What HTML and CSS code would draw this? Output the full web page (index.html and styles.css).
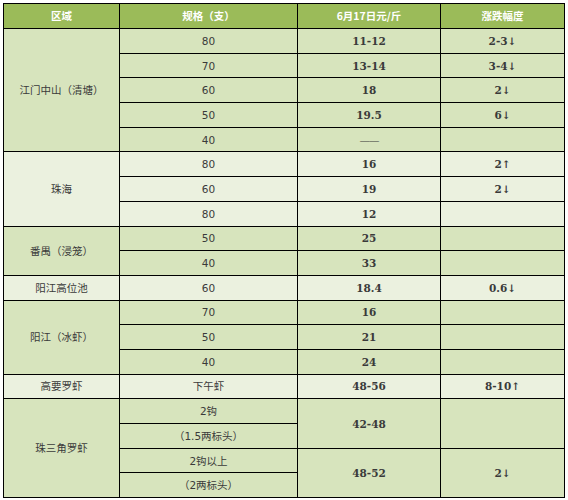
FILE: index.html
```html
<!DOCTYPE html>
<html lang="zh">
<head>
<meta charset="utf-8">
<link rel="stylesheet" href="styles.css">
</head>
<body>
<table class="price">
  <colgroup>
    <col class="c1"><col class="c2"><col class="c3"><col class="c4">
  </colgroup>
  <thead>
    <tr class="head"><th>区域</th><th>规格（支）</th><th>6月17日元/斤</th><th>涨跌幅度</th></tr>
  </thead>
  <tbody>
    <tr class="dk"><td rowspan="5" class="area">江门中山（清塘）</td><td class="spec">80</td><td class="num">11-12</td><td class="down">2-3↓</td></tr>
    <tr class="dk"><td class="spec">70</td><td class="num">13-14</td><td class="down">3-4↓</td></tr>
    <tr class="dk"><td class="spec">60</td><td class="num">18</td><td class="down">2↓</td></tr>
    <tr class="dk"><td class="spec">50</td><td class="num">19.5</td><td class="down">6↓</td></tr>
    <tr class="dk"><td class="spec">40</td><td class="num dash">——</td><td></td></tr>

    <tr class="lt"><td rowspan="3" class="area">珠海</td><td class="spec">80</td><td class="num">16</td><td class="up">2↑</td></tr>
    <tr class="lt"><td class="spec">60</td><td class="num">19</td><td class="down">2↓</td></tr>
    <tr class="lt"><td class="spec">80</td><td class="num">12</td><td></td></tr>

    <tr class="dk"><td rowspan="2" class="area">番禺（浸笼）</td><td class="spec">50</td><td class="num">25</td><td></td></tr>
    <tr class="dk"><td class="spec">40</td><td class="num">33</td><td></td></tr>

    <tr class="lt"><td class="area">阳江高位池</td><td class="spec">60</td><td class="num">18.4</td><td class="down">0.6↓</td></tr>

    <tr class="dk"><td rowspan="3" class="area">阳江（冰虾）</td><td class="spec">70</td><td class="num">16</td><td></td></tr>
    <tr class="dk"><td class="spec">50</td><td class="num">21</td><td></td></tr>
    <tr class="dk"><td class="spec">40</td><td class="num">24</td><td></td></tr>

    <tr class="lt"><td class="area">高要罗虾</td><td class="spec">下午虾</td><td class="num">48-56</td><td class="up">8-10↑</td></tr>

    <tr class="dk"><td rowspan="4" class="area">珠三角罗虾</td><td class="spec">2钩</td><td rowspan="2" class="num">42-48</td><td rowspan="2"></td></tr>
    <tr class="dk"><td class="spec">（1.5两标头）</td></tr>
    <tr class="dk"><td class="spec">2钩以上</td><td rowspan="2" class="num">48-52</td><td rowspan="2" class="down">2↓</td></tr>
    <tr class="dk"><td class="spec">（2两标头）</td></tr>
  </tbody>
</table>
</body>
</html>
```

FILE: styles.css
```css
html, body {
  margin: 0;
  padding: 0;
  background: #ffffff;
}
body {
  padding: 3px 0 0 3px;
  font-family: "Noto Sans CJK SC", "Noto Sans", sans-serif;
}
.price {
  border-collapse: collapse;
  table-layout: fixed;
  width: 561px;
  border: 1px solid #000000;
}
.c1 { width: 116px; }
.c2 { width: 178px; }
.c3 { width: 143px; }
.c4 { width: 124px; }
.price th, .price td {
  border: 1px solid #000000;
  padding: 0;
  text-align: center;
  vertical-align: middle;
  font-size: 10.5px;
  line-height: 12px;
  color: #3a3a3a;
}
.head th {
  height: 24px;
  background: #9bbb59;
  color: #ffffff;
  font-weight: bold;
  font-size: 10.5px;
}
tbody tr { height: 24.7px; }
.dk td { background: #d7e4bd; }
.lt td { background: #ebf1df; }
.area { color: #2c2c2c; }
.spec {
  font-family: "DejaVu Sans", "Noto Sans CJK SC", sans-serif;
  font-size: 10px;
  color: #3c3c3c;
}
.num {
  font-family: "DejaVu Serif", "Noto Sans CJK SC", serif;
  font-weight: bold;
  font-size: 9px;
  color: #3a3a3a;
}
.dash { font-weight: normal; letter-spacing: -1px; }
.down {
  font-family: "DejaVu Serif", "Noto Sans CJK SC", serif;
  font-weight: bold;
  font-size: 9px;
  color: #7f9a48;
}
.up {
  font-family: "DejaVu Serif", "Noto Sans CJK SC", serif;
  font-weight: bold;
  font-size: 9px;
  color: #c0262c;
}
```
